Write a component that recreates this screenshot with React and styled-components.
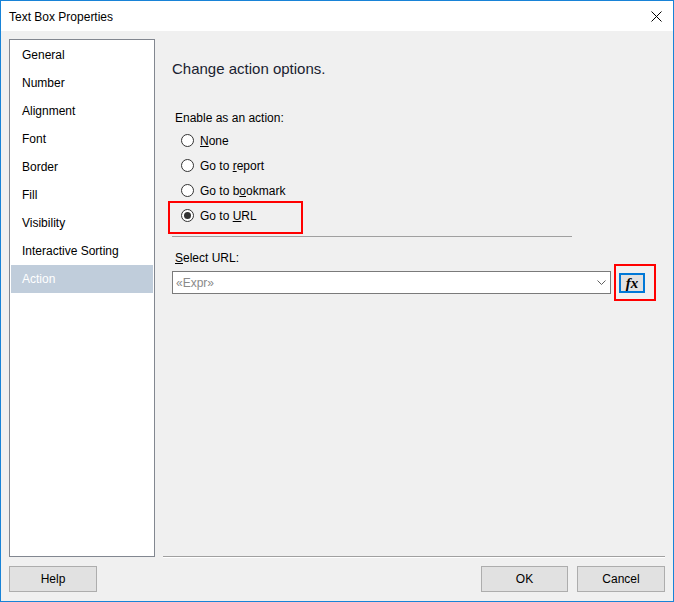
import React from 'react'
import styled, { createGlobalStyle } from 'styled-components'

const GlobalStyle = createGlobalStyle`
  html, body {
    margin: 0;
    padding: 0;
    background: #ffffff;
  }
  body {
    font-family: "Liberation Sans", Arial, sans-serif;
    font-size: 12px;
    color: #000000;
  }
  * {
    box-sizing: border-box;
  }
`

const pages = ['General', 'Number', 'Alignment', 'Font', 'Border', 'Fill', 'Visibility', 'Interactive Sorting', 'Action']

const Window = styled.div`
  width: 674px;
  height: 602px;
  border: 1px solid #1883d7;
  background: #f0f0f0;
  display: flex;
  flex-direction: column;
`

const TitleBar = styled.div`
  height: 30px;
  background: #ffffff;
  display: flex;
  align-items: center;
  justify-content: space-between;
  padding-left: 8px;
  padding-right: 10px;
`

const Title = styled.span`
  font-size: 12px;
  color: #000000;
  margin-top: 1px;
`

const CloseButton = styled.button`
  width: 14px;
  height: 14px;
  padding: 0;
  border: none;
  background: transparent;
  display: flex;
  align-items: center;
  justify-content: center;
`

const Body = styled.div`
  flex: 1;
  display: flex;
  flex-direction: column;
  padding: 8px 8px 9px 8px;
`

const Main = styled.div`
  height: 518px;
  display: flex;
  gap: 8px;
`

const Sidebar = styled.ul`
  width: 146px;
  margin: 0;
  padding: 1px;
  list-style: none;
  background: #ffffff;
  border: 1px solid #828790;
`

const SidebarItem = styled.li`
  height: 28px;
  line-height: 28px;
  padding-left: 11px;
  background: ${p => (p.$active ? '#c0cddb' : 'transparent')};
  color: ${p => (p.$active ? '#ffffff' : '#000000')};
`

const Panel = styled.div`
  flex: 1;
  display: flex;
  flex-direction: column;
  padding-left: 9px;
  border-bottom: 1px solid #a0a0a0;
  box-shadow: 0 1px 0 #ffffff;
`

const Heading = styled.h2`
  margin: 20px 0 0 0;
  font-size: 15px;
  line-height: 20px;
  font-weight: normal;
  color: #1a2230;
`

const Label = styled.div`
  margin-top: ${p => p.$top}px;
  margin-left: 3px;
  line-height: 16px;
`

const RadioGroup = styled.div`
  margin-top: 2px;
  display: flex;
  flex-direction: column;
`

const RadioRow = styled.label`
  position: relative;
  height: 25px;
  width: fit-content;
  display: flex;
  align-items: center;
  gap: 6px;
  padding-left: 9px;

  ${p => p.$marked && `
    &::after {
      content: '';
      position: absolute;
      left: -4px;
      top: -2px;
      width: 131px;
      height: 29px;
      border: 2px solid #ff0000;
    }
  `}
`

const RadioCircle = styled.span`
  width: 13px;
  height: 13px;
  border-radius: 50%;
  border: 1px solid #333333;
  background: #ffffff;
  display: flex;
  align-items: center;
  justify-content: center;

  &::before {
    content: '';
    width: 7px;
    height: 7px;
    border-radius: 50%;
    background: ${p => (p.$checked ? '#333333' : 'transparent')};
  }
`

const Separator = styled.hr`
  width: 400px;
  margin: 8px 0 0 0;
  border: none;
  border-top: 1px solid #a0a0a0;
  height: 0;
`

const UrlRow = styled.div`
  margin-top: 5px;
  height: 23px;
  display: flex;
  align-items: center;
  gap: 3px;
`

const Combo = styled.div`
  width: 439px;
  height: 23px;
  border: 1px solid #7a7a7a;
  background: #ffffff;
  display: flex;
  align-items: center;
  justify-content: space-between;
  padding: 0 4px 0 3px;
`

const Placeholder = styled.span`
  color: #8a8a8a;
`

const Marked = styled.div`
  width: 42px;
  height: 37px;
  border: 2px solid #ff0000;
  display: flex;
  align-items: center;
  justify-content: flex-start;
  padding-left: 3px;
`

const FxButton = styled.button`
  width: 26px;
  height: 20px;
  padding: 0;
  border: 2px solid #0078d7;
  background: #e1e1e1;
  font-family: "Liberation Serif", "Times New Roman", serif;
  font-weight: bold;
  font-style: italic;
  font-size: 15px;
  line-height: 14px;
  color: #000000;
`

const Footer = styled.div`
  margin-top: 9px;
  display: flex;
  gap: 9px;
`

const Button = styled.button`
  width: ${p => p.$width || 87}px;
  height: 26px;
  padding: 0;
  border: 1px solid #adadad;
  background: #e1e1e1;
  font-family: inherit;
  font-size: 12px;
  color: #000000;
  margin-left: ${p => (p.$push ? 'auto' : '0')};
`

const Key = styled.span`
  text-decoration: underline;
`

const options = [
  { id: 'none', label: <><Key>N</Key>one</> },
  { id: 'report', label: <>Go to <Key>r</Key>eport</> },
  { id: 'bookmark', label: <>Go to b<Key>o</Key>okmark</> },
  { id: 'url', label: <>Go to <Key>U</Key>RL</> },
]

export default function App() {
  const selected = 'url'

  return (
    <>
      <GlobalStyle />
      <Window>
        <TitleBar>
          <Title>Text Box Properties</Title>
          <CloseButton aria-label="Close">
            <svg width="11" height="11" viewBox="0 0 11 11">
              <path d="M0.5 0.5 L10.5 10.5 M10.5 0.5 L0.5 10.5" stroke="#000" strokeWidth="1" />
            </svg>
          </CloseButton>
        </TitleBar>
        <Body>
          <Main>
            <Sidebar>
              {pages.map(p => (
                <SidebarItem key={p} $active={p === 'Action'}>{p}</SidebarItem>
              ))}
            </Sidebar>
            <Panel>
              <Heading>Change action options.</Heading>
              <Label $top={31}>Enable as an action:</Label>
              <RadioGroup>
                {options.map(o => (
                  <RadioRow key={o.id} $marked={o.id === selected}>
                    <RadioCircle $checked={o.id === selected} />
                    <span>{o.label}</span>
                  </RadioRow>
                ))}
              </RadioGroup>
              <Separator />
              <Label $top={13}><Key>S</Key>elect URL:</Label>
              <UrlRow>
                <Combo>
                  <Placeholder>«Expr»</Placeholder>
                  <svg width="9" height="5" viewBox="0 0 9 5">
                    <path d="M0.5 0.5 L4.5 4.5 L8.5 0.5" stroke="#606060" fill="none" strokeWidth="1" />
                  </svg>
                </Combo>
                <Marked>
                  <FxButton>fx</FxButton>
                </Marked>
              </UrlRow>
            </Panel>
          </Main>
          <Footer>
            <Button $width={88}>Help</Button>
            <Button $push>OK</Button>
            <Button $width={88}>Cancel</Button>
          </Footer>
        </Body>
      </Window>
    </>
  )
}
